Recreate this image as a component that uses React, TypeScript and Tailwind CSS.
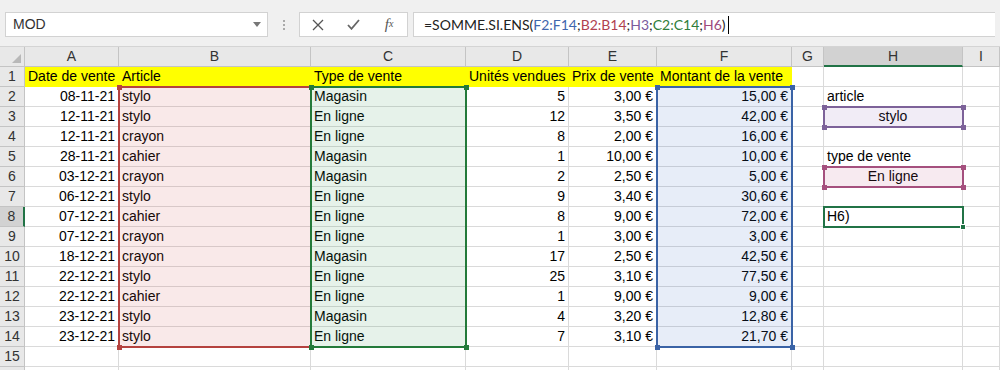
import type { ReactNode } from 'react'

const cols = ['A', 'B', 'C', 'D', 'E', 'F', 'G', 'H', 'I']

type Row = [string, string, string, string, string, string]

const rows: Row[] = [
  ['08-11-21', 'stylo', 'Magasin', '5', '3,00 €', '15,00 €'],
  ['12-11-21', 'stylo', 'En ligne', '12', '3,50 €', '42,00 €'],
  ['12-11-21', 'crayon', 'En ligne', '8', '2,00 €', '16,00 €'],
  ['28-11-21', 'cahier', 'Magasin', '1', '10,00 €', '10,00 €'],
  ['03-12-21', 'crayon', 'Magasin', '2', '2,50 €', '5,00 €'],
  ['06-12-21', 'stylo', 'En ligne', '9', '3,40 €', '30,60 €'],
  ['07-12-21', 'cahier', 'En ligne', '8', '9,00 €', '72,00 €'],
  ['07-12-21', 'crayon', 'En ligne', '1', '3,00 €', '3,00 €'],
  ['18-12-21', 'crayon', 'Magasin', '17', '2,50 €', '42,50 €'],
  ['22-12-21', 'stylo', 'En ligne', '25', '3,10 €', '77,50 €'],
  ['22-12-21', 'cahier', 'En ligne', '1', '9,00 €', '9,00 €'],
  ['23-12-21', 'stylo', 'Magasin', '4', '3,20 €', '12,80 €'],
  ['23-12-21', 'stylo', 'En ligne', '7', '3,10 €', '21,70 €'],
]

const headers = ['Date de vente', 'Article', 'Type de vente', 'Unités vendues', 'Prix de vente', 'Montant de la vente']

// H column content, by sheet row
const hCol: Record<number, { text: string; center?: boolean }> = {
  2: { text: 'article' },
  3: { text: 'stylo', center: true },
  5: { text: 'type de vente' },
  6: { text: 'En ligne', center: true },
  8: { text: 'H6)' },
}

const gridCls = 'grid grid-cols-[25px_94px_192px_155px_103px_88px_135px_32px_139px_1fr] grid-rows-[repeat(17,20px)]'

function Cell({ children, right, center, yellow }: { children?: ReactNode; right?: boolean; center?: boolean; yellow?: boolean }) {
  return (
    <div
      className={`flex items-end overflow-hidden whitespace-nowrap border-r border-b px-[3px] pb-[1px] leading-[17px] ${
        yellow ? 'bg-[#ffff00] border-[#ffff00]' : 'border-[#dadada]'
      } ${right ? 'justify-end' : center ? 'justify-center' : 'justify-start'}`}
    >
      {children}
    </div>
  )
}

function Handle({ pos, color }: { pos: string; color: string }) {
  return <span className={`absolute h-[5px] w-[5px] ${pos} ${color}`} />
}

function Range({ area, border, fill, handle }: { area: string; border: string; fill: string; handle: string }) {
  return (
    <div className={`relative -mt-px -ml-px -mr-px -mb-px border-2 ${area} ${border} ${fill}`}>
      <Handle pos="-top-[3.5px] -left-[3.5px]" color={handle} />
      <Handle pos="-top-[3.5px] -right-[3.5px]" color={handle} />
      <Handle pos="-bottom-[3.5px] -left-[3.5px]" color={handle} />
      <Handle pos="-bottom-[3.5px] -right-[3.5px]" color={handle} />
    </div>
  )
}

function TopBar() {
  return (
    <div className="flex h-[47px] items-start bg-[#f0f0f0] px-[5px] pt-[12px] border-b border-[#d4d4d4]">
      <div className="flex h-[25px] w-[263px] items-center justify-between border border-[#d2d2d2] bg-white pl-[7px] pr-[6px] text-[14px] text-[#333]">
        <span>MOD</span>
        <svg width="8" height="5" viewBox="0 0 8 5"><path d="M0 0h8L4 5z" fill="#777" /></svg>
      </div>
      <div className="flex h-[25px] w-[31px] flex-col items-center justify-center gap-[2px]">
        <span className="h-[2px] w-[2px] bg-[#aaa]" />
        <span className="h-[2px] w-[2px] bg-[#aaa]" />
        <span className="h-[2px] w-[2px] bg-[#aaa]" />
      </div>
      <div className="flex h-[25px] w-[109px] items-center border border-[#d2d2d2] bg-white">
        <div className="flex w-[36px] justify-center">
          <svg width="12" height="12" viewBox="0 0 12 12"><path d="M1 1l10 10M11 1L1 11" stroke="#555" strokeWidth="1.3" /></svg>
        </div>
        <div className="flex w-[36px] justify-center">
          <svg width="13" height="11" viewBox="0 0 13 11"><path d="M1 6l3.5 3.8L12 1" stroke="#666" strokeWidth="1.8" fill="none" /></svg>
        </div>
        <div className="flex w-[36px] justify-center font-['Liberation_Serif',serif] text-[15px] italic text-[#555]">
          f<span className="text-[10px] leading-none mt-[6px]">x</span>
        </div>
      </div>
      <div className="ml-[5px] flex h-[25px] flex-1 items-center border border-[#d2d2d2] border-r-0 bg-white pl-[10px] font-['Lato',sans-serif] text-[14px] text-[#222]">
        <span>=SOMME.SI.ENS(</span>
        <span className="text-[#3f66ad]">F2:F14</span>
        <span>;</span>
        <span className="text-[#b0414f]">B2:B14</span>
        <span>;</span>
        <span className="text-[#7a5a9c]">H3</span>
        <span>;</span>
        <span className="text-[#2f7d3a]">C2:C14</span>
        <span>;</span>
        <span className="text-[#9c4a7c]">H6</span>
        <span>)</span>
        <span className="ml-[2px] h-[18px] w-px bg-black" />
      </div>
    </div>
  )
}

export default function App() {
  const sheetRows = Array.from({ length: 15 }, (_, i) => i + 1)
  return (
    <div className="h-[370px] w-[1000px] overflow-hidden bg-white font-['Liberation_Sans',Arial,sans-serif] text-[14px] text-black">
      <TopBar />
      <div className="relative">
        <div className={gridCls}>
          {/* corner */}
          <div className="relative border-r border-b border-[#c4c4c4] bg-[#e8e8e8]">
            <svg className="absolute bottom-[3px] right-[3px]" width="9" height="9" viewBox="0 0 9 9"><path d="M9 0v9H0z" fill="#b8b8b8" /></svg>
          </div>
          {cols.map((c) => (
            <div
              key={c}
              className={`flex items-center justify-center border-r text-[14px] ${
                c === 'H'
                  ? 'border-b-2 border-r-[#c4c4c4] border-b-[#217346] bg-[#d2d2d2] text-[#333]'
                  : 'border-b border-[#c4c4c4] bg-[#e8e8e8] text-[#333]'
              }`}
            >
              {c}
            </div>
          ))}
          {sheetRows.map((r) => {
            const d = r >= 2 && r <= 14 ? rows[r - 2] : null
            const h = hCol[r]
            return [
              <div
                key={`rh${r}`}
                className={`flex items-center justify-center border-b text-[14px] ${
                  r === 8
                    ? 'border-r-2 border-r-[#217346] border-b-[#c4c4c4] bg-[#d2d2d2] text-[#333]'
                    : 'border-r border-[#c4c4c4] bg-[#e8e8e8] text-[#333]'
                }`}
              >
                {r}
              </div>,
              r === 1
                ? headers.map((t, i) => (
                    <Cell key={`h${i}`} yellow>
                      {t}
                    </Cell>
                  ))
                : [
                    <Cell key={`a${r}`} right>{d?.[0]}</Cell>,
                    <Cell key={`b${r}`}>{d?.[1]}</Cell>,
                    <Cell key={`c${r}`}>{d?.[2]}</Cell>,
                    <Cell key={`d${r}`} right>{d?.[3]}</Cell>,
                    <Cell key={`e${r}`} right>{d?.[4]}</Cell>,
                    <Cell key={`f${r}`} right>{d?.[5]}</Cell>,
                  ],
              <Cell key={`g${r}`} />,
              <Cell key={`hh${r}`} center={h?.center}>{h?.text}</Cell>,
              <Cell key={`i${r}`} />,
            ]
          })}
          {Array.from({ length: 10 }, (_, i) => (
            <div key={`last${i}`} className={`border-r ${i === 0 ? 'border-[#c4c4c4] bg-[#e8e8e8]' : 'border-[#dadada]'}`} />
          ))}
        </div>

        {/* formula reference highlights drawn over the sheet */}
        <div className={`pointer-events-none absolute inset-0 ${gridCls}`}>
          <Range area="[grid-area:3/3/16/4]" border="border-[#b5423f]" fill="bg-[rgba(205,70,70,0.12)]" handle="bg-[#b5423f]" />
          <Range area="[grid-area:3/4/16/5]" border="border-[#237a3a]" fill="bg-[rgba(50,150,80,0.12)]" handle="bg-[#237a3a]" />
          <Range area="[grid-area:3/7/16/8]" border="border-[#3a63a6]" fill="bg-[rgba(60,110,200,0.12)]" handle="bg-[#3a63a6]" />
          <Range area="[grid-area:4/9/5/10]" border="border-[#7d6299]" fill="bg-[rgba(140,100,180,0.12)]" handle="bg-[#7d6299]" />
          <Range area="[grid-area:7/9/8/10]" border="border-[#a5507e]" fill="bg-[rgba(190,80,130,0.12)]" handle="bg-[#a5507e]" />
          <div className="relative -mt-px -ml-px -mr-px -mb-px border-2 border-[#217346] [grid-area:9/9/10/10]">
            <span className="absolute -bottom-[4px] -right-[4px] h-[6px] w-[6px] border border-white bg-[#217346]" />
          </div>
        </div>
      </div>
    </div>
  )
}
